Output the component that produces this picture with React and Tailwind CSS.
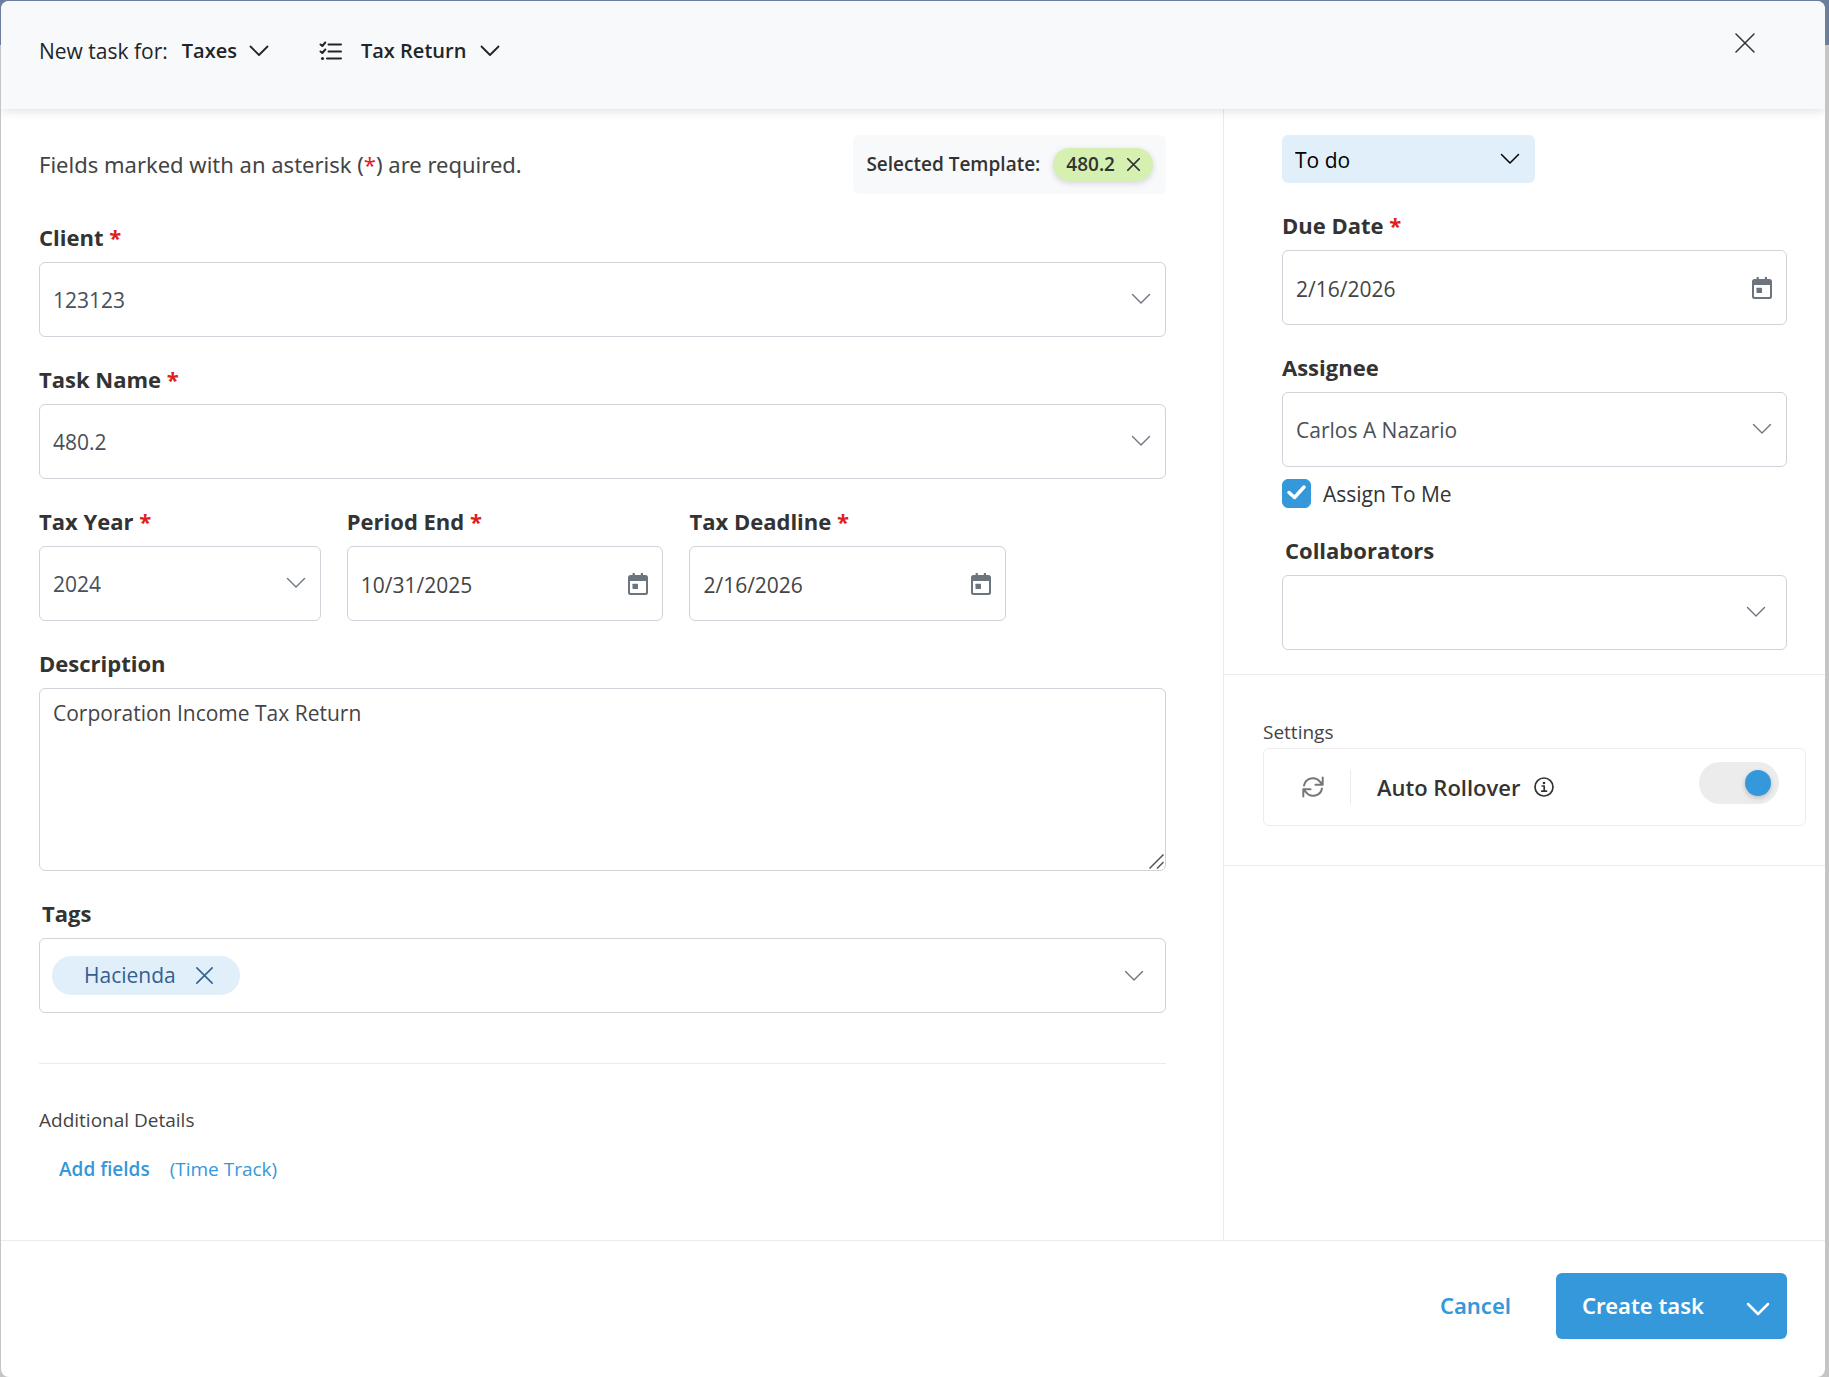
import { useState } from 'react';

const fieldBox = 'h-[75px] w-full rounded-md border border-[#ced4da] bg-white';

function Chevron({ className = '', stroke = 1.4 }) {
    return (
        <svg className={className} width="20" height="12" viewBox="0 0 20 12" fill="none" stroke="currentColor" strokeWidth={stroke} strokeLinecap="round" strokeLinejoin="round" aria-hidden="true">
            <path d="M1.5 1.5L10 10L18.5 1.5" />
        </svg>
    );
}

function Cross({ size = 20, stroke = 1.5 }) {
    return (
        <svg width={size} height={size} viewBox="0 0 20 20" fill="none" stroke="currentColor" strokeWidth={stroke} strokeLinecap="round" aria-hidden="true">
            <path d="M1 1L19 19M19 1L1 19" />
        </svg>
    );
}

function CalendarIcon() {
    return (
        <svg width="20" height="22" viewBox="0 0 20 22" aria-hidden="true">
            <path fill="currentColor" fillRule="evenodd" d="M4.6 0h2.2v2h6V0H15v2h2.5A2.5 2.5 0 0 1 20 4.5v15A2.5 2.5 0 0 1 17.5 22h-15A2.5 2.5 0 0 1 0 19.5v-15A2.5 2.5 0 0 1 2.5 2h2.1zM2 8v11.2c0 .5.3.8.8.8h14.4c.5 0 .8-.3.8-.8V8z" />
            <rect x="4.5" y="10.8" width="5.5" height="5.2" rx=".4" fill="currentColor" />
        </svg>
    );
}

function ListCheckIcon() {
    return (
        <svg width="24" height="20" viewBox="0 0 24 20" fill="none" stroke="currentColor" strokeWidth="2" strokeLinecap="round" strokeLinejoin="round" aria-hidden="true">
            <path d="M9.5 3.5h12.5M9.5 10.5h12.5M8 17.5h14" />
            <path d="M1.5 3.5L3.3 5L6.3 1.5M1.5 10.5L3.3 12L6.3 8.5" />
            <circle cx="3.5" cy="17.5" r="1.5" fill="currentColor" stroke="none" />
        </svg>
    );
}

function RotateIcon() {
    return (
        <svg width="22" height="22" viewBox="0 0 22 22" fill="none" stroke="currentColor" strokeWidth="2" strokeLinecap="round" strokeLinejoin="round" aria-hidden="true">
            <path d="M2 9.5A9 9 0 0 1 18 5.8L20.5 8.5M20.7 1.5V8.7H13.5" />
            <path d="M20 12.5A9 9 0 0 1 4 16.2L1.5 13.5M1.3 20.5V13.3H8.5" />
        </svg>
    );
}

function InfoIcon() {
    return (
        <svg width="20" height="20" viewBox="0 0 20 20" fill="none" stroke="currentColor" strokeWidth="1.7" aria-hidden="true">
            <circle cx="10" cy="10" r="9" />
            <path d="M8.2 9H10.2V14M7.8 14.2H12.5" strokeLinecap="round" strokeLinejoin="round" />
            <circle cx="10" cy="6" r="1.3" fill="currentColor" stroke="none" />
        </svg>
    );
}

function Label({ htmlFor, required, className = '', children }) {
    return (
        <label htmlFor={htmlFor} className={`mb-[10px] block text-[22px] leading-[30px] font-bold text-[#333] ${className}`}>
            {children}
            {required && <span className="text-[#e02020]"> *</span>}
        </label>
    );
}

function SelectField({ id, label, required, options, inset = 'right-[15px]', labelClass }) {
    return (
        <div>
            <Label htmlFor={id} required={required} className={labelClass}>{label}</Label>
            <div className="relative">
                <select id={id} className={`${fieldBox} appearance-none px-[13px] pt-[3px] text-[21px] text-[#495057]`}>
                    {options.map((o) => <option key={o}>{o}</option>)}
                </select>
                <Chevron className={`pointer-events-none absolute top-[31px] ${inset} text-[#6c757d]`} />
            </div>
        </div>
    );
}

function DateField({ id, label, value }) {
    return (
        <div>
            <Label htmlFor={id} required>{label}</Label>
            <div className={`${fieldBox} flex items-center pr-[14px]`}>
                <input id={id} type="text" defaultValue={value} className="h-full min-w-0 flex-1 rounded-md px-[13px] pt-[2px] text-[21px] text-[#444] outline-none" />
                <button type="button" aria-label={`Choose ${label}`} className="text-[#6c757d]">
                    <CalendarIcon />
                </button>
            </div>
        </div>
    );
}

export default function App() {
    const [assignToMe, setAssignToMe] = useState(true);
    const [rollover, setRollover] = useState(true);

    return (
        <div className="relative min-h-screen bg-[#c5c5c5] pt-px pr-1 pl-px font-['Open_Sans','Noto_Sans',sans-serif] text-[#333]">
            <div className="absolute inset-x-0 top-0 h-[45px] bg-[#6b7f9d]" />

            <div className="relative flex min-h-[calc(100vh-1px)] flex-col overflow-hidden rounded-lg bg-white">
                {/* Header */}
                <header className="relative z-10 flex h-[108px] items-start justify-between bg-[#f8f9fb] pr-14 pl-[38px] shadow-[0_2px_10px_rgba(0,0,0,0.12)]">
                    <div className="flex items-center pt-[35px] text-[21px] leading-[30px] text-[#212529]">
                        <span className="mr-[14px]">New task for:</span>
                        <button type="button" className="flex items-center gap-3 text-[20px] font-semibold">
                            Taxes <Chevron stroke={1.8} />
                        </button>
                        <button type="button" className="ml-[50px] flex items-center text-[20px] font-semibold">
                            <ListCheckIcon />
                            <span className="mr-[14px] ml-[18px]">Tax Return</span>
                            <Chevron stroke={1.8} />
                        </button>
                    </div>
                    <button type="button" aria-label="Close" className="mt-[18px] flex size-12 items-center justify-center">
                        <Cross />
                    </button>
                </header>

                {/* Body */}
                <div className="flex flex-1">
                    <main className="flex flex-1 flex-col gap-[27px] border-r border-[#e9ebed] pt-[26px] pr-[57px] pb-14 pl-[38px]">
                        <div className="flex h-[60px] items-start justify-between">
                            <p className="pt-[14px] font-['Noto_Sans',sans-serif] text-[22px] leading-[30px] text-[#444]">
                                Fields marked with an asterisk (<span className="text-[#e02020]">*</span>) are required.
                            </p>
                            <div className="flex h-[59px] items-center gap-[13px] rounded-md bg-[#f8f9fb] px-[13px] text-[19px] font-semibold">
                                Selected Template:
                                <span className="flex h-[33px] items-center gap-3 rounded-full bg-[#d5f0b1] px-[13px] shadow-[0_2px_6px_rgba(0,0,0,0.15)]">
                                    480.2
                                    <button type="button" aria-label="Remove template"><Cross size={13} stroke={2.4} /></button>
                                </span>
                            </div>
                        </div>

                        <SelectField id="client" label="Client" required options={['123123']} />
                        <SelectField id="task-name" label="Task Name" required options={['480.2']} />

                        <div className="flex gap-[26px]">
                            <div className="w-1/4"><SelectField id="tax-year" label="Tax Year" required options={['2024']} /></div>
                            <div className="w-[28.1%]"><DateField id="period-end" label="Period End" value="10/31/2025" /></div>
                            <div className="w-[28.1%]"><DateField id="tax-deadline" label="Tax Deadline" value="2/16/2026" /></div>
                        </div>

                        <div>
                            <Label htmlFor="description">Description</Label>
                            <div className="relative">
                                <textarea id="description" defaultValue="Corporation Income Tax Return" className="block h-[183px] w-full resize-y rounded-md border border-[#ced4da] px-[13px] py-2 text-[21px] leading-[32px] text-[#444]" />
                                <svg className="pointer-events-none absolute right-[2px] bottom-[2px] bg-white" width="15" height="15" viewBox="0 0 15 15" fill="none" stroke="#555" strokeWidth="1.5" aria-hidden="true">
                                    <path d="M.5 14.5L14.5 .5M8 14.5L14.5 8" />
                                </svg>
                            </div>
                        </div>

                        <div>
                            <Label htmlFor="tags" className="pl-[3px]">Tags</Label>
                            <div className={`${fieldBox} flex items-center pr-[21px] pl-3`}>
                                <span className="flex h-[39px] items-center gap-5 rounded-full bg-[#e1effb] pr-[27px] pl-8 text-[21px] text-[#33608f]">
                                    Hacienda
                                    <button type="button" aria-label="Remove Hacienda"><Cross size={17} stroke={1.8} /></button>
                                </span>
                                <input id="tags" type="text" className="h-full min-w-0 flex-1 px-3 text-[21px] outline-none" />
                                <Chevron className="text-[#6c757d]" />
                            </div>
                        </div>

                        <section className="mt-[23px] border-t border-[#e9ebed] pt-[43px]">
                            <h2 className="text-[19px] leading-[26px] text-[#444]">Additional Details</h2>
                            <div className="mt-6 flex gap-5 pl-5 text-[19px] leading-[24px] text-[#3498db]">
                                <a href="#fields" className="font-semibold">Add fields</a>
                                <a href="#time-track">(Time Track)</a>
                            </div>
                        </section>
                    </main>

                    <aside className="w-[32.95%] pt-[26px]">
                        <div className="flex flex-col gap-[27px] border-b border-[#e9ebed] pr-[38px] pb-6 pl-[58px]">
                            <div className="relative w-1/2">
                                <select aria-label="Status" className="block h-12 w-full appearance-none rounded-md bg-[#e1effb] px-[13px] pt-[3px] text-[21px] text-black">
                                    <option>To do</option>
                                </select>
                                <Chevron className="pointer-events-none absolute top-[18px] right-[15px] text-black" stroke={1.5} />
                            </div>
                            <DateField id="due-date" label="Due Date" value="2/16/2026" />
                            <div>
                                <SelectField id="assignee" label="Assignee" options={['Carlos A Nazario']} />
                                <label className="mt-[11px] flex h-[30px] items-center gap-3 text-[21px] text-[#333]">
                                    <span className="relative size-[29px]">
                                        <input type="checkbox" checked={assignToMe} onChange={(e) => setAssignToMe(e.target.checked)} className="block size-[29px] appearance-none rounded-md border border-[#ced4da] checked:border-[#3498db] checked:bg-[#3498db]" />
                                        {assignToMe && (
                                            <svg className="pointer-events-none absolute inset-0" width="29" height="29" viewBox="0 0 29 29" fill="none" stroke="white" strokeWidth="3.5" strokeLinecap="round" strokeLinejoin="round">
                                                <path d="M7 13.5L12.5 18.5L22 8" />
                                            </svg>
                                        )}
                                    </span>
                                    <span className="pt-[3px]">Assign To Me</span>
                                </label>
                            </div>
                            <SelectField id="collaborators" label="Collaborators" labelClass="pl-[3px]" options={['']} inset="right-[21px]" />
                        </div>

                        <section className="border-b border-[#e9ebed] pt-11 pr-[19px] pb-[39px] pl-[39px]">
                            <h2 className="text-[19px] leading-[26px] text-[#444]">Settings</h2>
                            <div className="mt-[3px] flex h-[78px] items-center rounded-md border border-[#ededed] pr-[26px] pl-[38px]">
                                <span className="text-[#777]"><RotateIcon /></span>
                                <span className="ml-[26px] h-[34px] w-px bg-[#e9ebed]" />
                                <label htmlFor="rollover" className="ml-[26px] text-[22px] leading-[30px] font-semibold">Auto Rollover</label>
                                <button type="button" aria-label="About auto rollover" className="ml-[14px]"><InfoIcon /></button>
                                <input id="rollover" type="checkbox" role="switch" checked={rollover} onChange={(e) => setRollover(e.target.checked)} className="mb-2 ml-auto flex h-[42px] w-20 appearance-none items-center rounded-full bg-[#ececec] px-2 before:size-[26px] before:rounded-full before:bg-[#999] before:shadow-[0_2px_5px_rgba(0,0,0,0.2)] checked:justify-end checked:before:bg-[#3498db]" />
                            </div>
                        </section>
                    </aside>
                </div>

                {/* Footer */}
                <footer className="flex h-[137px] items-start justify-end border-t border-[#e9ebed] pt-8 pr-[38px] font-['Noto_Sans',sans-serif] text-[22px] font-semibold">
                    <button type="button" className="mr-[45px] h-[66px] pb-[2px] text-[#3498db]">Cancel</button>
                    <div className="flex h-[66px] rounded-md bg-[#3498db] text-white">
                        <button type="button" className="pb-[2px] pl-[26px]">Create task</button>
                        <button type="button" aria-label="More create options" className="flex items-center pt-[6px] pr-[17px] pl-[42px]">
                            <svg width="24" height="14" viewBox="0 0 24 14" fill="none" stroke="currentColor" strokeWidth="2.5" strokeLinecap="round" strokeLinejoin="round">
                                <path d="M2 2L12 12L22 2" />
                            </svg>
                        </button>
                    </div>
                </footer>
            </div>
        </div>
    );
}
